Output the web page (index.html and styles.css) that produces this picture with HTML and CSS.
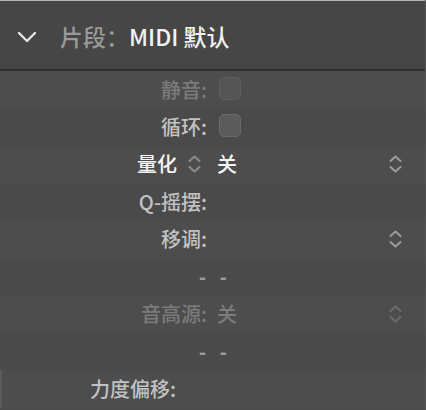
FILE: index.html
```
<!DOCTYPE html>
<html lang="zh-CN">
<head>
<meta charset="utf-8">
<link rel="stylesheet" href="styles.css">
</head>
<body>
<div class="panel">
  <div class="header">
    <svg class="disclosure" width="20" height="12" viewBox="0 0 20 12"><path d="M2 2 L10 10 L18 2" fill="none" stroke="#e6e6e6" stroke-width="2.4" stroke-linecap="round" stroke-linejoin="round"/></svg>
    <span class="h-label">片段：</span><span class="h-value">MIDI 默认</span>
  </div>
  <div class="rows">
    <div class="row disabled">
      <div class="label">静音:</div>
      <div class="value"><span class="check faded"></span></div>
      <div class="end"></div>
    </div>
    <div class="row">
      <div class="label">循环:</div>
      <div class="value"><span class="check"></span></div>
      <div class="end"></div>
    </div>
    <div class="row">
      <div class="label strong">量化<svg class="updown inline" width="15" height="20" viewBox="0 0 15 20"><path d="M2.5 7 L7.5 2.5 L12.5 7 M2.5 13 L7.5 17.5 L12.5 13" fill="none" stroke="#8c8c8c" stroke-width="2" stroke-linecap="round" stroke-linejoin="round"/></svg></div>
      <div class="value strong">关</div>
      <div class="end"><svg class="updown" width="15" height="20" viewBox="0 0 15 20"><path d="M2.5 7 L7.5 2.5 L12.5 7 M2.5 13 L7.5 17.5 L12.5 13" fill="none" stroke="#9c9c9c" stroke-width="2" stroke-linecap="round" stroke-linejoin="round"/></svg></div>
    </div>
    <div class="row">
      <div class="label">Q-摇摆:</div>
      <div class="value"></div>
      <div class="end"></div>
    </div>
    <div class="row">
      <div class="label">移调:</div>
      <div class="value"></div>
      <div class="end"><svg class="updown" width="15" height="20" viewBox="0 0 15 20"><path d="M2.5 7 L7.5 2.5 L12.5 7 M2.5 13 L7.5 17.5 L12.5 13" fill="none" stroke="#9c9c9c" stroke-width="2" stroke-linecap="round" stroke-linejoin="round"/></svg></div>
    </div>
    <div class="row dash-row">
      <div class="dashes">- -</div>
    </div>
    <div class="row disabled">
      <div class="label">音高源:</div>
      <div class="value">关</div>
      <div class="end"><svg class="updown" width="15" height="20" viewBox="0 0 15 20"><path d="M2.5 7 L7.5 2.5 L12.5 7 M2.5 13 L7.5 17.5 L12.5 13" fill="none" stroke="#6c6c6c" stroke-width="2" stroke-linecap="round" stroke-linejoin="round"/></svg></div>
    </div>
    <div class="row dash-row">
      <div class="dashes">- -</div>
    </div>
    <div class="row velocity">
      <div class="label">力度偏移:</div>
      <div class="value"></div>
      <div class="end"></div>
    </div>
  </div>
</div>
</body>
</html>
```
FILE: styles.css
```
* { box-sizing: border-box; }
html, body {
  margin: 0;
  padding: 0;
  background: #4c4c4c;
}
body {
  width: 426px;
  height: 410px;
  overflow: hidden;
  font-family: "Noto Sans CJK SC", "Noto Sans", sans-serif;
}
.panel {
  width: 426px;
  height: 410px;
  border-right: 1px solid #555;
}
.header {
  height: 71px;
  background: #464646;
  border-top: 1px solid #b5b5b5;
  border-bottom: 2px solid #2f2f2f;
  display: flex;
  align-items: center;
  padding-left: 17px;
  padding-top: 3px;
  font-size: 23px;
  font-weight: 500;
  line-height: 1;
}
.disclosure {
  margin-right: 23px;
  margin-top: 0;
}
.h-label { color: #9a9a9a; }
.h-value { color: #f2f2f2; }
.rows {
  display: flex;
  flex-direction: column;
}
.row {
  height: 37.4px;
  display: grid;
  grid-template-columns: 207px 1fr 37px;
  column-gap: 10px;
  align-items: center;
  font-size: 20px;
  font-weight: 500;
  color: #c2c2c2;
  line-height: 1;
}
.row:nth-child(odd) { background: #4d4d4d; }
.row:nth-child(even) { background: #4a4a4a; }
.label {
  text-align: right;
  display: flex;
  justify-content: flex-end;
  align-items: center;
}
.value {
  display: flex;
  align-items: center;
}
.strong { color: #f4f4f4; }
.disabled { color: #7b7b7b; }
.updown { display: block; }
.updown.inline { margin-left: 10px; margin-right: 5px; }
.end { display: flex; align-items: center; }
.check {
  display: block;
  width: 22px;
  height: 23px;
  border-radius: 5px;
  background: #5b5b5b;
  border: 1px solid #6a6a6a;
  margin-left: 2px;
  margin-top: -3px;
}
.check.faded {
  background: #555;
  border-color: #5f5f5f;
}
.dash-row {
  display: flex;
  padding-left: 199px;
  color: #9a9a9a;
}
.dashes {
  letter-spacing: 4px;
  font-family: "Liberation Sans", sans-serif;
  font-size: 21px;
  font-weight: 700;
}
.velocity {
  grid-template-columns: 174px 1fr 37px;
  border-left: 2px solid #5a5a5a;
}
.velocity .label { margin-left: -2px; }
```
